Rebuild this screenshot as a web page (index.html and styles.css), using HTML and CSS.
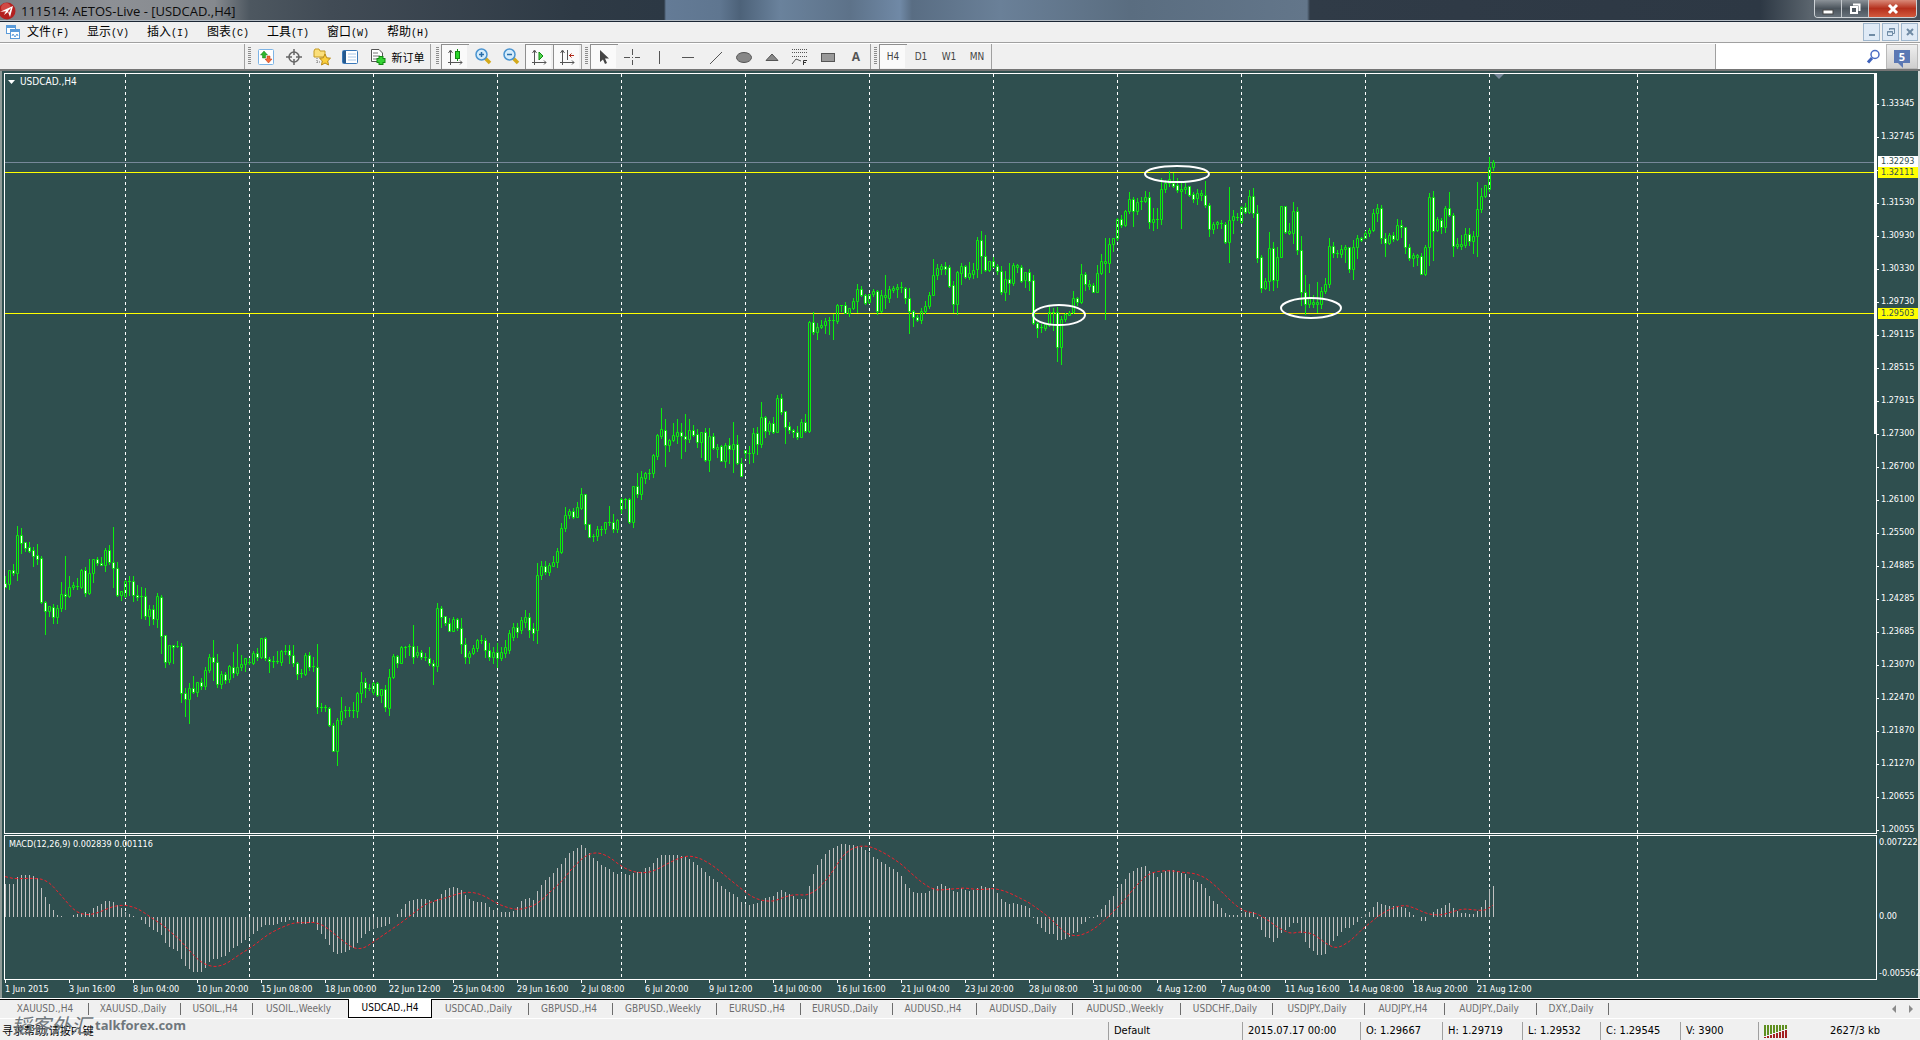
FILE: index.html
```html
<!DOCTYPE html>
<html lang="zh-CN">
<head>
<meta charset="utf-8">
<title>111514: AETOS-Live - [USDCAD.,H4]</title>
<link rel="stylesheet" href="styles.css">
</head>
<body>
<header class="titlebar">
  <svg class="app-icon" width="16" height="20" viewBox="0 0 16 20" aria-hidden="true"><circle cx="7" cy="11" r="8.500" fill="#b3201f"/><circle cx="6" cy="8" r="5" fill="#d24a45"/><path d="M0 12Q6 9 13 6L10 17 8 12 4 15 6 11Z" fill="#fff"/><path d="M8 11 11 8 9 13Z" fill="#b3201f"/></svg>
  <h1 class="title">111514: AETOS-Live - [USDCAD.,H4]</h1>
  <div class="win-controls">
    <button class="win-btn win-min" aria-label="最小化"><svg width="12" height="12"><rect x="1" y="7" width="10" height="4" fill="#fff" stroke="#444"/></svg></button>
    <button class="win-btn win-restore" aria-label="还原"><svg width="12" height="12"><path d="M4 1.500H10.500V8" fill="none" stroke="#fff" stroke-width="2"/><rect x="2" y="4" width="6" height="6" fill="none" stroke="#fff" stroke-width="2"/></svg></button>
    <button class="win-btn win-close" aria-label="关闭"><svg width="12" height="12"><path d="M2 2 10 10M10 2 2 10" stroke="#fff" stroke-width="3"/></svg></button>
  </div>
</header>

<nav class="menubar">
  <svg class="doc-icon" width="16" height="16" viewBox="0 0 16 16" fill="#fff" stroke="#5b9bd9" aria-hidden="true"><rect x="1.500" y="1.500" width="9" height="8"/><path d="M1 3H11" stroke-width="2"/><rect x="5.500" y="5.500" width="9" height="9"/><path d="M5 7H15" stroke-width="2"/><path d="M7 12 8 10 10 13 12 10 13 12" fill="none"/></svg>
  <button class="menu">文件<span class="key">(F)</span></button>
  <button class="menu">显示<span class="key">(V)</span></button>
  <button class="menu">插入<span class="key">(I)</span></button>
  <button class="menu">图表<span class="key">(C)</span></button>
  <button class="menu">工具<span class="key">(T)</span></button>
  <button class="menu">窗口<span class="key">(W)</span></button>
  <button class="menu">帮助<span class="key">(H)</span></button>
  <div class="mdi-controls">
    <button class="mdi-btn" aria-label="最小化图表"><svg width="10" height="10"><path d="M2 8H8" stroke="#6f8ba5" stroke-width="2"/></svg></button>
    <button class="mdi-btn" aria-label="还原图表"><svg width="10" height="10" fill="none" stroke="#6f8ba5"><path d="M3.500 3V1.500H8.500V6.500H7M3 2H9"/><path d="M1.500 4.500H6.500V8.500H1.500ZM1 5H7"/></svg></button>
    <button class="mdi-btn" aria-label="关闭图表"><svg width="10" height="10"><path d="M2 2 8 8M8 2 2 8" stroke="#6f8ba5" stroke-width="2"/></svg></button>
  </div>
</nav>

<div class="toolbar">
  <div class="group group-first">
    <button class="tool" aria-label="市场报价"><svg width="16" height="16"><rect x=".5" y=".5" width="15" height="15" rx="1" fill="#fff" stroke="#7db4e6"/><path d="M6 2 2.500 6H4.500V9H7.500V6H9.500Z" fill="#2fb52f" stroke="#188018" stroke-width=".5"/><path d="M10.500 14 14 10H12V7H9V10H7Z" fill="#f26a3a" stroke="#b8330c" stroke-width=".5"/></svg></button>
    <button class="tool" aria-label="数据窗口"><svg width="16" height="16" fill="none" stroke="#666"><circle cx="8" cy="8" r="5" stroke-width="1.500"/><path d="M8 0V6M8 10V16M0 8H6M10 8H16" stroke-width="1.500"/></svg></button>
    <button class="tool" aria-label="导航"><svg width="18" height="18"><path d="M1 3 2 1H6L7 3H12V9H1Z" fill="#fbdf7a" stroke="#c49a22"/><path d="M4 10V16M4 14H8" stroke="#777" stroke-dasharray="1 1"/><path d="M12 6 13.700 9.800 17.500 10.200 14.700 12.900 15.500 17 12 15 8.500 17 9.300 12.900 6.500 10.200 10.300 9.800Z" fill="#fbcf3c" stroke="#b88a16"/></svg></button>
    <button class="tool" aria-label="终端"><svg width="16" height="14"><rect x=".5" y=".5" width="15" height="13" rx="1" fill="#fff" stroke="#3a78b8"/><path d="M2.500 1V13" stroke="#24598f" stroke-width="3"/><path d="M6 4H14M6 7H14M6 10H14" stroke="#a9c8e8"/></svg></button>
    <button class="tool tool-wide"><svg width="17" height="18"><path d="M1.500 1.500H9L12.500 5V13.500H1.500Z" fill="#fff" stroke="#555"/><path d="M3 5H8M3 8H10M3 11H8" stroke="#777"/><path d="M11 8V17M6.500 12.500H15.500" stroke="#128a12" stroke-width="5"/><path d="M11 9V16M7.500 12.500H14.500" stroke="#35d335" stroke-width="3"/></svg>新订单</button>
  </div>
  <div class="group">
    <button class="tool pressed" aria-label="蜡烛图"><svg width="16" height="16"><path d="M3.500 2V16M1 13.500H15M1.500 4 3.500 1 5.500 4M13 11.500 15 13.500 13 15.500" fill="none" stroke="#555"/><path d="M10.500 0V12" stroke="#118a11"/><rect x="8.500" y="2.500" width="4" height="7" fill="#2ad62a" stroke="#118a11"/></svg></button>
    <button class="tool" aria-label="放大"><svg width="17" height="17"><path d="M10 10 15 15" stroke="#d3a91c" stroke-width="3.500"/><circle cx="6.500" cy="6.500" r="5.500" fill="#d5ecfb" stroke="#4a94d0" stroke-width="1.500"/><path d="M4 6.500H9M6.500 4V9" stroke="#2a6ea8" stroke-width="1.500"/></svg></button>
    <button class="tool" aria-label="缩小"><svg width="17" height="17"><path d="M10 10 15 15" stroke="#d3a91c" stroke-width="3.500"/><circle cx="6.500" cy="6.500" r="5.500" fill="#d5ecfb" stroke="#4a94d0" stroke-width="1.500"/><path d="M4 6.500H9" stroke="#2a6ea8" stroke-width="1.500"/></svg></button>
    <button class="tool pressed" aria-label="自动滚动"><svg width="16" height="16"><path d="M3.500 2V16M1 13.500H15M1.500 4 3.500 1 5.500 4M13 11.500 15 13.500 13 15.500" fill="none" stroke="#555"/><path d="M8 3V11L12 7Z" fill="#4fd64f" stroke="#118a11"/></svg></button>
    <button class="tool pressed" aria-label="图表平移"><svg width="16" height="16"><path d="M3.500 2V16M1 13.500H15M1.500 4 3.500 1 5.500 4M13 11.500 15 13.500 13 15.500M8.500 1V11" fill="none" stroke="#555"/><path d="M10 6.500H15M12.500 4.500 10.500 6.500 12.500 8.500" fill="none" stroke="#b02a1a"/></svg></button>
  </div>
  <div class="group">
    <button class="tool pressed" aria-label="光标"><svg width="14" height="16"><path d="M3 1V13L6 10.500 8 15 10 14 8 9.500H12Z" fill="#444"/></svg></button>
    <button class="tool" aria-label="十字准线"><svg width="16" height="16"><path d="M8.500 0V6M8.500 11V16M0 8.500H6M11 8.500H16M8 8.500H9" stroke="#555"/></svg></button>
    <button class="tool" aria-label="垂直线"><svg width="16" height="16"><path d="M7.500 2V15" stroke="#555"/></svg></button>
    <button class="tool" aria-label="水平线"><svg width="16" height="16"><path d="M2 8.500H14" stroke="#555"/></svg></button>
    <button class="tool" aria-label="趋势线"><svg width="16" height="16"><path d="M2 15 14 3" stroke="#555"/></svg></button>
    <button class="tool" aria-label="椭圆"><svg width="16" height="16"><ellipse cx="8" cy="8.500" rx="7.500" ry="5" fill="#888" stroke="#555"/></svg></button>
    <button class="tool" aria-label="三角形"><svg width="16" height="16"><path d="M8 5 14 11.500H2Z" fill="#888" stroke="#555"/></svg></button>
    <button class="tool" aria-label="斐波那契"><svg width="18" height="18"><path d="M1 1.500H17M1 4.500H17M1 8.500H17" stroke="#555" stroke-dasharray="1 1"/><path d="M1 16 5 11 10 13" fill="none" stroke="#555"/><path d="M12.500 17V12.500H16M12 14.500H15" fill="none" stroke="#333"/></svg></button>
    <button class="tool" aria-label="矩形"><svg width="16" height="16"><rect x="1.500" y="4.500" width="13" height="8" fill="#999" stroke="#555"/></svg></button>
    <button class="tool tool-text">A</button>
  </div>
  <div class="group">
    <button class="tool period pressed">H4</button>
    <button class="tool period">D1</button>
    <button class="tool period">W1</button>
    <button class="tool period">MN</button>
  </div>
  <label class="search">
    <input class="search-input" type="text" aria-label="搜索">
    <svg width="14" height="16" fill="none" aria-hidden="true"><circle cx="9" cy="5.500" r="4" stroke="#4a6cc4" stroke-width="1.500"/><path d="M6 9 2 13.500" stroke="#3f62bb" stroke-width="3"/></svg>
  </label>
  <button class="messages" aria-label="消息"><span class="bubble">5</span></button>
</div>

<main class="workspace">
  <section class="pane price-pane">
    <svg class="plot" id="price-plot"></svg>
    <p class="pane-title symbol"><svg width="7" height="4" aria-hidden="true"><path d="M0 0H7L3.500 4Z" fill="#fff"/></svg>USDCAD.,H4</p>
  </section>
  <div class="scale price-scale">
    <ol class="prices">
      <li>1.33345</li><li>1.32745</li><li class="covered"></li><li>1.31530</li><li>1.30930</li><li>1.30330</li><li>1.29730</li><li>1.29115</li><li>1.28515</li><li>1.27915</li><li>1.27300</li><li>1.26700</li><li>1.26100</li><li>1.25500</li><li>1.24885</li><li>1.24285</li><li>1.23685</li><li>1.23070</li><li>1.22470</li><li>1.21870</li><li>1.21270</li><li>1.20655</li><li>1.20055</li>
    </ol>
    <span class="tag tag-bid">1.32293</span>
    <span class="tag tag-high">1.32111</span>
    <span class="tag tag-low">1.29503</span>
  </div>
  <section class="pane macd-pane">
    <svg class="plot" id="macd-plot"></svg>
    <p class="pane-title">MACD(12,26,9) 0.002839 0.001116</p>
  </section>
  <div class="scale macd-scale"><span>0.007222</span><span>0.00</span><span>-0.005562</span></div>
  <ol class="times">
    <li>1 Jun 2015</li><li>3 Jun 16:00</li><li>8 Jun 04:00</li><li>10 Jun 20:00</li><li>15 Jun 08:00</li><li>18 Jun 00:00</li><li>22 Jun 12:00</li><li>25 Jun 04:00</li><li>29 Jun 16:00</li><li>2 Jul 08:00</li><li>6 Jul 20:00</li><li>9 Jul 12:00</li><li>14 Jul 00:00</li><li>16 Jul 16:00</li><li>21 Jul 04:00</li><li>23 Jul 20:00</li><li>28 Jul 08:00</li><li>31 Jul 00:00</li><li>4 Aug 12:00</li><li>7 Aug 04:00</li><li>11 Aug 16:00</li><li>14 Aug 08:00</li><li>18 Aug 20:00</li><li>21 Aug 12:00</li>
  </ol>
</main>

<nav class="tabs">
  <button class="tab">XAUUSD.,H4</button>
  <button class="tab">XAUUSD.,Daily</button>
  <button class="tab">USOIL.,H4</button>
  <button class="tab last-before">USOIL.,Weekly</button>
  <button class="tab active">USDCAD.,H4</button>
  <button class="tab">USDCAD.,Daily</button>
  <button class="tab">GBPUSD.,H4</button>
  <button class="tab">GBPUSD.,Weekly</button>
  <button class="tab">EURUSD.,H4</button>
  <button class="tab">EURUSD.,Daily</button>
  <button class="tab">AUDUSD.,H4</button>
  <button class="tab">AUDUSD.,Daily</button>
  <button class="tab">AUDUSD.,Weekly</button>
  <button class="tab">USDCHF.,Daily</button>
  <button class="tab">USDJPY.,Daily</button>
  <button class="tab">AUDJPY.,H4</button>
  <button class="tab">AUDJPY.,Daily</button>
  <button class="tab">DXY.,Daily</button>
  <div class="tab-scroll">
    <button class="scroll-btn" aria-label="向左"><svg width="4" height="8"><path d="M4 0V8L0 4Z" fill="#8a8a8a"/></svg></button>
    <button class="scroll-btn" aria-label="向右"><svg width="4" height="8"><path d="M0 0V8L4 4Z" fill="#8a8a8a"/></svg></button>
  </div>
</nav>

<footer class="statusbar">
  <span class="hint">寻求帮助,请按F1键</span>
  <span class="cell">Default</span>
  <span class="cell">2015.07.17 00:00</span>
  <span class="cell">O: 1.29667</span>
  <span class="cell">H: 1.29719</span>
  <span class="cell">L: 1.29532</span>
  <span class="cell">C: 1.29545</span>
  <span class="cell">V: 3900</span>
  <span class="cell traffic"><svg width="24" height="13" aria-hidden="true"><path d="M1 0V11M4 0V10M7 0V9M10 0V8M13 0V7M16 0V6M19 0V5M22 0V4" stroke="#5f8f1f" stroke-width="2"/><path d="M1 13V12M4 13V11M7 13V10M10 13V9M13 13V8M16 13V7M19 13V6M22 13V5" stroke="#a32222" stroke-width="2"/></svg>2627/3 kb</span>
  <div class="watermark"><span class="brand">韬客外汇</span><span class="domain">talkforex.com</span></div>
</footer>
<script src="chart.js"></script>
</body>
</html>
```
FILE: styles.css
```css
* { box-sizing: border-box; }
body {
  margin: 0;
  min-height: 100vh;
  display: flex;
  flex-direction: column;
  background: #f0f0f0;
  color: #000;
  font-family: "DejaVu Sans Condensed", "Open Sans", "Noto Sans CJK SC", sans-serif;
  font-size: 10px;
  overflow-x: hidden;
}
button {
  margin: 0;
  padding: 0;
  border: 0;
  background: none;
  color: inherit;
  font: inherit;
}
ol { margin: 0; padding: 0; list-style: none; }
svg { display: block; flex: none; }

.titlebar {
  display: flex;
  align-items: center;
  height: 22px;
  border-bottom: 1px solid #1b2634;
  box-shadow: inset 0 -1px #b4bcc4;
  background: linear-gradient(90deg, #7d7f84 0, #8d9095 110px, #85898e 215px, #4d5760 250px, #414b55 330px, #2e3a45 575px, #2c3844 664px, #647b96 666px, #5f7690 720px, #4d6279 740px, #6a829c 780px, #5d7289 850px, #7089a6 900px, #596d83 912px, #6a8098 1000px, #5a6d80 1130px, #63768a 1307px, #303b47 1310px, #2d3844 1760px, #5a646d 1810px, #454f59 100%);
}
.app-icon { align-self: flex-start; }
.title {
  flex: 1;
  margin: 0 0 0 5px;
  font: 13px/20px "Open Sans", "Noto Sans", sans-serif;
  color: #0c0c0c;
}
.win-controls {
  display: flex;
  align-self: flex-start;
  margin-right: 3px;
  border: 1px solid #cdd2d6;
  border-top: 0;
  border-radius: 0 0 4px 4px;
  overflow: hidden;
}
.win-btn {
  display: flex;
  align-items: center;
  justify-content: center;
  width: 27px;
  height: 17px;
  border-right: 1px solid #c4c9cd;
  background: linear-gradient(#8b9298, #4b545c 50%, #67717a);
}
.win-close {
  width: 47px;
  border-right: 0;
  background: linear-gradient(#d98a78, #b5301c 50%, #d2593c);
}

.menubar {
  display: flex;
  align-items: center;
  height: 21px;
  padding: 0 2px 0 5px;
  border-bottom: 1px solid #a0a0a0;
}
.menu {
  width: 60px;
  padding-left: 6px;
  text-align: left;
  white-space: nowrap;
  font: 12px/18px "Noto Sans CJK SC", sans-serif;
}
.key { font: 10px/18px "Liberation Mono", monospace; }
.mdi-controls { display: flex; gap: 2px; margin-left: auto; }
.mdi-btn {
  display: flex;
  align-items: center;
  justify-content: center;
  width: 17px;
  height: 18px;
  border: 1px solid #9fb6cc;
  background: #dfeaf6;
}

.toolbar {
  display: flex;
  height: 28px;
  padding-right: 2px;
  border-top: 1px solid #fff;
  border-bottom: 2px solid #757575;
}
.group {
  display: flex;
  position: relative;
  padding-left: 8px;
  border-right: 1px solid #a0a0a0;
}
.group::before {
  content: "";
  position: absolute;
  left: 3px;
  top: 3px;
  bottom: 4px;
  width: 3px;
  background: repeating-linear-gradient(#8c8c8c 0 1px, #f0f0f0 1px 2px);
}
.group-first {
  margin-left: 244px;
  margin-right: 2px;
  border-left: 1px solid #a0a0a0;
  padding-left: 7px;
}
.tool {
  display: flex;
  align-items: center;
  justify-content: center;
  width: 28px;
  height: 25px;
}
.tool-wide { width: 66px; gap: 5px; font: 11px/16px "Noto Sans CJK SC", sans-serif; }
.tool-text { font: bold 12px/16px "Open Sans", sans-serif; color: #555; }
.period { font-size: 10px; color: #444; }
.pressed {
  background: #fafafa;
  box-shadow: inset 1px 1px #8f8f8f, inset -2px -1px #f0f0f0;
}
.search {
  display: flex;
  align-items: center;
  width: 171px;
  margin-left: auto;
  padding-right: 6px;
  border-left: 1px solid #a0a0a0;
  background: #fff;
}
.search-input { flex: 1; min-width: 0; border: 0; outline: 0; background: none; }
.messages {
  display: flex;
  align-items: center;
  justify-content: center;
  width: 32px;
  border: 1px solid #b9b9b9;
  background: linear-gradient(#efefef, #cfcfcf);
}
.bubble {
  position: relative;
  width: 16px;
  height: 13px;
  background: #5b78b4;
  color: #fff;
  font: bold 11px/13px "Open Sans", sans-serif;
}
.bubble::after {
  content: "";
  position: absolute;
  left: 3px;
  top: 12px;
  border: 3px solid transparent;
  border-top-color: #5b78b4;
  border-right-color: #5b78b4;
}

.workspace {
  flex: 1;
  display: grid;
  grid-template-columns: minmax(0, 1fr) 41px;
  grid-template-rows: minmax(740px, 1fr) 146px 18px;
  padding-top: 2px;
  padding-left: 2px;
  border-left: 2px solid #8f9a96;
  border-right: 2px solid #d5dad8;
  background: #2f4f4f;
  color: #fff;
  font-size: 9px;
  line-height: 12px;
}
.pane { position: relative; border: 1px solid #fff; min-width: 0; }
.macd-pane { margin-top: 1px; }
.plot { position: absolute; inset: 0; width: 100%; height: 100%; }
.price-pane::after {
  content: "";
  position: absolute;
  top: -1px;
  right: -1px;
  width: 3px;
  height: 361px;
  background: #fff;
}
.pane-title { position: relative; margin: 2px 4px; }
.symbol { display: flex; align-items: center; gap: 5px; margin-left: 3px; font-size: 10px; }
.scale { position: relative; white-space: nowrap; }
.prices { padding-top: 14px; margin-bottom: -33px; }
.prices li {
  position: relative;
  height: 33px;
  padding-left: 4px;
  line-height: 33px;
}
.prices li::before {
  content: "";
  position: absolute;
  left: 0;
  top: 17px;
  width: 2px;
  height: 1px;
  background: #fff;
}
.tag {
  position: absolute;
  left: 1px;
  right: 0;
  height: 11px;
  padding-left: 3px;
  line-height: 11px;
  color: #2f4f4f;
  background: #ffff00;
}
.tag-bid { top: 83px; background: #fff; }
.tag-high { top: 94px; }
.tag-low { top: 235px; }
.macd-scale {
  display: grid;
  grid-template-rows: 74px 1fr 12px;
  padding: 2px 0 1px 2px;
}
.times { grid-column: 1 / -1; display: flex; padding-left: 1px; overflow: hidden; }
.times li { position: relative; flex: none; width: 64px; padding-top: 3px; white-space: nowrap; }
.times li::before {
  content: "";
  position: absolute;
  left: 0;
  top: 0;
  width: 1px;
  height: 3px;
  background: #fff;
}

.grid { stroke: #fff; stroke-dasharray: 3 3; }
.level { stroke: #ffff00; }
.bid { stroke: #778899; }
.bars { stroke: #0bf00b; fill: none; }
.fall { stroke: #fff; fill: none; }
.mark { stroke: #fff; stroke-width: 2; fill: none; }
.histogram { stroke: #c0c0c0; }
.signal { stroke: #f0202c; fill: none; stroke-dasharray: 3 2; }
.shift { fill: #778899; }

.tabs {
  display: grid;
  grid-template-columns: 84px 92px 72px 95px 84px 97px 84px 104px 84px 92px 84px 96px 108px 92px 92px 80px 92px 72px 1fr;
  height: 20px;
  padding-left: 5px;
  border-top: 1px solid #fff;
  box-shadow: inset 0 1px #000;
  color: #6d6d6d;
  line-height: 12px;
}
.tab {
  position: relative;
  height: 19px;
  padding-right: 4px;
  white-space: nowrap;
}
.tab::after {
  content: "";
  position: absolute;
  right: 0;
  top: 4px;
  width: 1px;
  height: 12px;
  background: #6d6d6d;
}
.tab.active { padding: 0; background: #fff; color: #000; border: 1px solid #000; border-top: 0; }
.tab.active::after, .tab.last-before::after { display: none; }
.tab-scroll { display: flex; justify-content: flex-end; align-items: center; gap: 13px; padding-right: 7px; }

.statusbar {
  position: relative;
  display: grid;
  grid-template-columns: minmax(0, 1fr) 134px 118px 82px 80px 78px 80px 78px 162px;
  height: 22px;
  padding-top: 3px;
  border-top: 1px solid #fff;
  font-size: 11px;
  line-height: 18px;
}
.cell { padding-left: 5px; border-left: 1px solid #a0a0a0; white-space: nowrap; }
.hint { padding-left: 2px; font: 11px/18px "Open Sans", "Noto Sans CJK SC", sans-serif; }
.traffic { display: flex; align-items: center; gap: 42px; }
.watermark {
  position: absolute;
  left: 11px;
  top: -6px;
  display: flex;
  align-items: center;
  gap: 4px;
  color: #6f777c;
}
.brand { font: italic 20px/24px "Noto Sans CJK SC", sans-serif; }
.domain { font: bold 13px/24px "Open Sans", sans-serif; }
```
FILE: chart.js
```js
// Bars per segment: high, body top, body bottom, low in thirds of a pixel below
// the segment's base; "d" marks a falling bar.
const STEP = 4;
const segments = [
  { base: 1278, bars: `228 250 260 262d,210 210 253 268,192 210 218 225d,77 105 218 240,83 105 128 160d,125 127 145 152d,127 140 152 157d,140 150 168 198d,132 165 177 192d,168 175 307 310d,303 306 334 402d,318 318 334 347,313 321 350 370d,316 324 350 370,245 283 325 332,168 283 287 328d,228 262 287 292,245 255 262 268,235 257 262 268d,207 210 260 265,200 210 278 287d,178 219 278 282,177 178 219 245,172 177 190 195d,172 188 194 195d,145 150 194 212,135 150 186 192d,82 186 205 262d,187 203 285 288d,273 273 285 300,240 243 287 290,228 243 244 285,228 243 285 302d,255 285 290 300d,262 289 290 353,263 289 349 358d,315 328 349 374,315 328 358 372d,280 289 358 382,285 291 407 460d,405 406 486 500d,435 435 486 492,435 436 440 488d,423 437 440 442,430 437 580 605d,563 580 596 648d,548 565 596 670,527 563 576 580d,546 546 576 588,533 547 557 568d,500 511 557 566,463 472 511 517,420 472 487 540d,463 487 551 560d,513 523 551 563,515 523 540 548d,495 499 538 545,455 500 520 530d,432 502 520 525,465 493 500 510,475 475 493 512,475 487 490 492,453 460 490 492,445 460 470 480d,413 415 470 475,410 415 475 480d,472 476 484 515d,468 484 486 500,453 484 486 488,450 453 486 495,435 452 456 462,435 450 464 490d,435 464 490 498d,487 490 521 538d,508 518 523 530d,460 465 521 525,457 465 501 510d,470 497 502 512d,432 500 620 640d,610 620 623 632,615 620 624 632,622 624 674 678d,670 674 752 754d,655 660 752 795,590 632 660 672,618 630 633 650,620 630 633 648,605 630 633 650,576 580 632 650,517 546 580 605,533 546 564 592d,552 563 566 570,545 550 575 583,546 550 586 588d,567 567 586 605,555 566 621 632d,508 532 623 645,462 468 532 534,465 468 488 500d,437 440 488 488,437 440 442 470,432 437 442 465,375 437 470 488d,438 457 466 472,450 457 471 478d,460 471 474 480,440 474 490 495d,480 490 498 552d,308 325 497 512,317 325 350 380d,348 349 370 375d,355 369 392 393d,350 357 392 393,355 357 385 390d,355 385 432 460d,415 432 472 488d,453 458 472 490,435 445 458 462,418 420 445 452,405 420 424 430,415 420 450 470d,430 450 470 480d,440 455 470 490,430 455 475 500d,440 455 475 480,420 440 460 470,390 400 450 460,370 380 410 420,370 380 395 410d,350 360 390 400,330 350 365 380,340 350 390 410d,370 385 400 420d` },
  { base: 918, bars: `550 585 750 790,543 559 584 597,543 559 576 583d,550 556 576 585,527 547 557 558,503 514 545 562,430 445 515 518,382 406 445 452,388 393 406 415,385 394 410 413d,367 382 410 411,325 343 383 387,343 343 433 448d,432 433 470 472d,462 469 471 482,437 448 467 480,437 446 449 465,427 427 448 460,377 427 429 435,403 427 446 455d,417 421 446 455,353 358 386 400,355 357 360 385,355 358 425 430d,318 319 426 440,280 319 342 350d,272 292 342 358,275 279 293 308,268 279 281 297,222 226 279 292,163 166 227 238,85 148 168 175,118 150 196 257d,177 181 196 212,130 166 181 182,117 157 167 190,130 157 169 235d,103 169 176 212d,118 151 176 187,135 151 164 167d,148 162 185 202d,157 157 185 230,145 157 241 243d,145 169 241 272,160 168 205 208d,193 200 206 232,195 198 242 244d,190 195 242 260,175 195 206 250d,127 193 206 277,165 193 250 252d,235 250 287 288d,210 211 218 235d,198 218 220 248,143 160 220 245,142 160 192 223d,67 112 191 200,107 112 152 170d,122 130 152 163,112 130 155 160d,45 55 155 156,43 55 95 102d,92 94 140 188d,127 138 150 160d,147 150 156 170d,138 157 170 177d,118 127 170 170,103 127 152 157d` },
  { base: 198, bars: `542 547 872 877,515 547 576 583d,550 560 576 598,540 556 560 565,535 542 556 580,530 540 543 582,523 540 543 598,492 496 543 548,494 495 497 512,487 495 518 520d,503 505 518 528,473 482 505 508,432 448 482 515,437 448 465 468d,462 466 490 493d,462 463 487 490,447 454 463 468,450 454 514 522d,450 466 514 516,404 466 470 505,437 447 473 487,437 444 449 455,432 442 446 470,425 441 443 455,441 443 473 488d,445 473 512 580d,510 512 530 558d,525 530 540 542d,505 514 540 548,482 499 514 520,457 464 499 505,356 405 464 466,372 384 405 417,372 377 386 402,366 377 386 403d,375 380 437 440d,422 435 491 517d,393 397 491 523,370 379 399 432,375 379 410 414d,365 400 410 418,370 390 402 413,292 300 388 410,272 300 347 400d,285 347 390 393d,362 363 389 392,350 363 378 382d,373 378 394 402d,379 393 455 463d,392 418 455 480,370 418 430 462d,368 376 430 434,373 376 380 395,375 380 422 425d,397 397 419 440,388 397 422 450d,405 420 550 553d,545 550 563 590d,553 560 564 575,548 552 565 570,497 517 555 558,503 515 519 570,500 517 620 662d,527 536 620 672,520 523 538 542,512 518 524 526,453 474 516 520,470 474 487 495d,373 402 487 488,397 402 432 450d,420 432 437 448,430 435 455 457d,375 400 455 455,342 363 400 402,295 364 368 538,295 312 368 397,293 295 312 332,235 238 295 300,225 238 255 262d,210 214 255 258,157 178 214 218,170 178 212 258d,175 187 212 222,170 182 187 207,153 170 184 187,157 170 247 263d,203 238 247 270,203 236 239 265,113 148 238 252,120 130 148 155,93 118 130 137,100 128 137 142d,113 135 150 155d,127 148 152 265,130 140 148 160,137 139 164 167d,157 163 176 187d,147 160 175 192,150 160 165 180,122 165 196 202d,190 195 268 288d,245 252 268 278,242 247 252 265,240 248 252 265,245 252 305 308d,140 240 305 365,210 228 240 278,218 230 232 240,198 202 245 248,190 202 217 220d,150 168 217 220,145 168 220 232d,195 220 353 365d` },
  { base: -42, bars: `585 592 684 697d,655 664 684 686,517 565 664 690,547 565 660 690d,560 592 660 680,438 439 592 592,438 439 516 520d,490 514 518 522,427 452 518 548,442 452 570 583d,528 570 695 735d,645 695 732 762d,672 715 732 740,705 727 731 740,665 727 733 755,680 694 732 745,655 673 694 700,535 558 673 680,545 558 580 590d,570 578 582 592,555 568 582 590,555 562 568 605,560 562 626 635d,540 561 626 658,525 535 561 595,530 535 541 543d,513 520 533 535,503 509 520 527,447 460 509 512,433 444 460 483,435 444 534 548d,520 534 548 587d,520 526 548 553,515 524 536 543d,477 496 536 540,480 495 502 532d,500 501 562 580d,553 562 593 600d,580 586 593 618,582 586 592 615,580 588 641 643d,555 560 641 645,400 411 560 615,393 411 512 600d,470 478 511 513,475 479 500 520d,438 445 500 515,397 445 464 468d,460 464 558 588d,535 553 558 565,525 553 557 567,505 522 556 560,505 522 542 555d,512 529 542 578,365 448 529 587,385 409 448 455,375 376 409 412,290 321 388 392,300 305 321 330` }
];

const macd = [177,177,177,157,150,150,150,152,160,188,215,238,255,270,272,276,275,271,268,265,261,265,248,243,236,229,228,231,240,250,262,267,273,277,286,297,305,316,320,330,353,365,372,378,402,422,432,440,440,440,428,412,403,401,396,392,381,370,362,354,345,336,328,318,305,300,299,299,298,292,290,285,285,293,298,298,293,295,315,328,342,360,382,387,383,380,375,370,355,340,328,318,312,310,306,302,297,275,268,252,238,228,226,222,221,222,225,230,222,208,195,190,187,188,196,210,222,228,232,232,235,245,254,256,260,262,261,258,245,228,222,220,224,198,180,165,155,145,130,117,100,85,78,68,60,70,85,98,108,120,127,132,140,146,144,148,150,145,142,140,130,126,115,100,91,90,90,90,90,92,95,102,112,120,128,142,152,162,172,183,192,202,207,215,230,237,240,237,233,228,220,216,212,200,195,200,208,212,222,222,222,182,148,120,102,88,76,70,62,57,58,60,60,64,66,74,82,95,102,110,118,125,132,140,152,178,190,200,205,205,205,198,188,182,178,182,190,198,200,190,196,198,196,188,183,187,190,190,205,222,230,238,235,237,240,243,250,279,296,310,322,327,328,345,345,342,336,325,320,298,290,280,279,270,253,240,225,212,190,178,162,145,137,130,127,123,138,145,155,145,137,136,136,138,143,148,158,165,172,177,188,212,228,238,250,265,270,270,270,265,262,260,262,282,315,335,340,352,340,325,315,305,293,295,325,350,368,378,390,390,388,360,348,333,320,310,308,300,290,278,267,260,245,230,236,240,243,244,242,245,250,262,271,277,289,288,275,262,253,248,240,235,248,258,263,265,266,266,258,245,225,193,183];

const grid = [];
for (let x = 120; x <= 1484; x += 124) grid.push(x);
grid.push(1632);
const gridLines = grid.map(x => `<line class="grid" x1="${x + 0.5}" x2="${x + 0.5}" y1="0" y2="100%"/>`).join("");

let outline = "", fill = "", index = 0;
for (const { base, bars } of segments) {
  for (const bar of bars.split(",")) {
    const [high, top, bottom, low] = bar.replace("d", "").split(" ").map(v => Math.round((base + Number(v)) / 3));
    const x = index * STEP + 0.5;
    outline += `M${x} ${high}V${top}M${x} ${bottom}V${low + 1}`;
    if (bottom - top < 2) {
      outline += `M${x - 1.5} ${top + 0.5}h3`;
    } else {
      outline += `M${x - 1} ${top + 0.5}h2V${bottom + 0.5}h-2Z`;
      if (bar.endsWith("d")) fill += `M${x} ${top + 1}V${bottom}`;
    }
    index += 1;
  }
}
document.getElementById("price-plot").innerHTML = `${gridLines}
  <line class="bid" x1="0" x2="100%" y1="88.5" y2="88.5"/>
  <line class="level" x1="0" x2="100%" y1="98.5" y2="98.5"/>
  <line class="level" x1="0" x2="100%" y1="239.5" y2="239.5"/>
  <path class="bars" d="${outline}"/><path class="fall" d="${fill}"/>
  <ellipse class="mark" cx="1172" cy="100" rx="32" ry="8"/>
  <ellipse class="mark" cx="1054" cy="241" rx="26" ry="10"/>
  <ellipse class="mark" cx="1306" cy="234" rx="30" ry="10"/>
  <path class="shift" d="M1489 0h10l-5 5z"/>`;

const level = v => v / 3 - 11;
const histogram = macd.map((v, i) => `M${i * STEP + 0.5} 81V${Math.round(level(v))}`).join("");
// The signal line is the nine-bar average of the histogram.
const padded = Array(8).fill(152).concat(macd);
const signal = macd.map((_, i) => {
  const mean = padded.slice(i, i + 9).reduce((a, b) => a + b, 0) / 9;
  return `${i * STEP},${level(mean).toFixed(1)}`;
}).join(" ");
document.getElementById("macd-plot").innerHTML = `${gridLines}
  <path class="histogram" d="${histogram}"/><polyline class="signal" points="${signal}"/>`;
```
